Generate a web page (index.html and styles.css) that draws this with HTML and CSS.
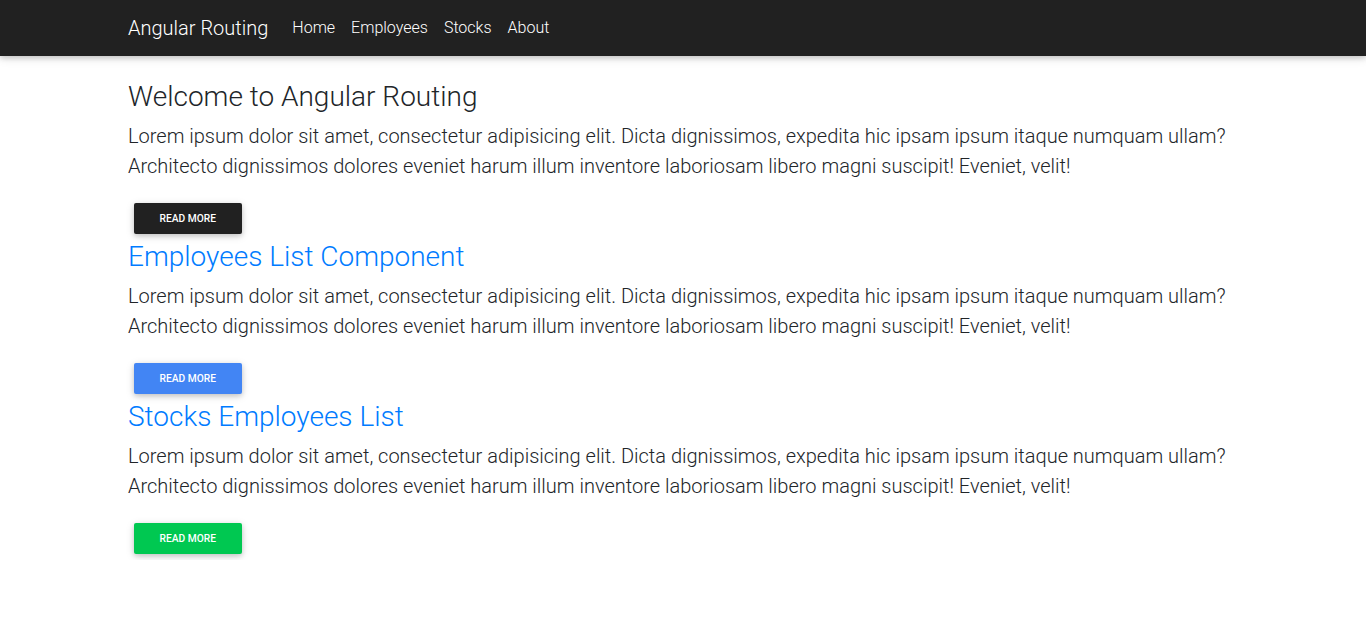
FILE: index.html
```html
<!DOCTYPE html>
<html lang="en">
<head>
<meta charset="utf-8">
<title>Angular Routing</title>
<link rel="stylesheet" href="styles.css">
</head>
<body>
<nav class="navbar">
  <div class="container nav-inner">
    <a class="brand" href="#">Angular Routing</a>
    <ul class="nav-links">
      <li><a href="#">Home</a></li>
      <li><a href="#">Employees</a></li>
      <li><a href="#">Stocks</a></li>
      <li><a href="#">About</a></li>
    </ul>
  </div>
</nav>
<main class="container content">
  <section class="block">
    <h3 class="title">Welcome to Angular Routing</h3>
    <p class="lead">Lorem ipsum dolor sit amet, consectetur adipisicing elit. Dicta dignissimos, expedita hic ipsam ipsum itaque numquam ullam? Architecto dignissimos dolores eveniet harum illum inventore laboriosam libero magni suscipit! Eveniet, velit!</p>
    <div class="actions"><a class="btn btn-dark" href="#">Read more</a></div>
  </section>
  <section class="block">
    <h3 class="title title-primary">Employees List Component</h3>
    <p class="lead">Lorem ipsum dolor sit amet, consectetur adipisicing elit. Dicta dignissimos, expedita hic ipsam ipsum itaque numquam ullam? Architecto dignissimos dolores eveniet harum illum inventore laboriosam libero magni suscipit! Eveniet, velit!</p>
    <div class="actions"><a class="btn btn-primary" href="#">Read more</a></div>
  </section>
  <section class="block">
    <h3 class="title title-primary">Stocks Employees List</h3>
    <p class="lead">Lorem ipsum dolor sit amet, consectetur adipisicing elit. Dicta dignissimos, expedita hic ipsam ipsum itaque numquam ullam? Architecto dignissimos dolores eveniet harum illum inventore laboriosam libero magni suscipit! Eveniet, velit!</p>
    <div class="actions"><a class="btn btn-success" href="#">Read more</a></div>
  </section>
</main>
</body>
</html>
```
FILE: styles.css
```css
* { box-sizing: border-box; }
html, body { margin: 0; padding: 0; }
body {
  font-family: Roboto, "Liberation Sans", sans-serif;
  font-weight: 300;
  font-size: 16px;
  line-height: 1.5;
  color: #212529;
  background: #fff;
}
.container {
  width: 1140px;
  margin: 0 auto;
  padding: 0 15px;
}
.navbar {
  background: #212121;
  height: 56px;
  box-shadow: 0 2px 5px 0 rgba(0,0,0,.16), 0 2px 10px 0 rgba(0,0,0,.12);
  position: relative;
  z-index: 2;
}
.nav-inner {
  display: flex;
  align-items: center;
  height: 56px;
}
.brand {
  color: #fff;
  text-decoration: none;
  font-size: 20px;
  font-weight: 300;
  margin-right: 16px;
  line-height: 1.5;
}
.nav-links {
  display: flex;
  list-style: none;
  margin: 0;
  padding: 0;
}
.nav-links a {
  display: block;
  color: #fff;
  text-decoration: none;
  font-weight: 300;
  font-size: 16px;
  padding: 8px;
}
.content { padding-top: 24px; }
.title {
  font-size: 28px;
  font-weight: 300;
  line-height: 33px;
  margin: 0 0 8px;
  color: #212529;
}
.title-primary { color: #007bff; }
.lead {
  font-size: 20px;
  font-weight: 300;
  line-height: 1.5;
  margin: 0 0 16px;
}
.actions { display: flex; }
.btn {
  display: inline-block;
  margin: 6px;
  padding: 8px 25.6px;
  font-size: 10.24px;
  line-height: 15px;
  font-weight: 500;
  text-transform: uppercase;
  text-decoration: none;
  color: #fff;
  border-radius: 2px;
  box-shadow: 0 2px 5px 0 rgba(0,0,0,.16), 0 2px 10px 0 rgba(0,0,0,.12);
}
.btn-dark { background: #212121; }
.btn-primary { background: #4285f4; }
.btn-success { background: #00c851; }
```
